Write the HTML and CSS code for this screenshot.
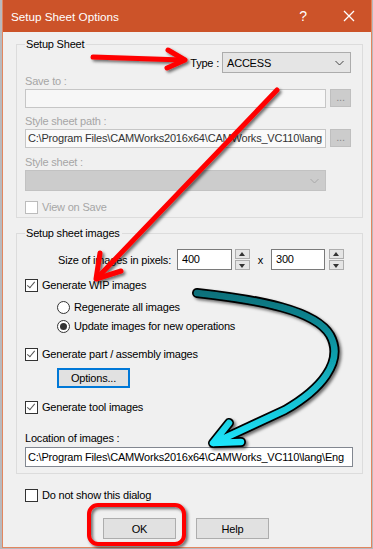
FILE: index.html
```html
<!DOCTYPE html>
<html lang="en">
  <head>
    <meta name="viewport" content="width=device-width, initial-scale=1.0">
    <meta charset="utf-8">
    <title>Setup Sheet Options</title>
    <link rel="stylesheet" href="styles.css">
  </head>
  <body>
    <div class="win">
      <div class="titlebar">
        <span class="title">Setup Sheet Options</span>
        <span class="tb-help">?</span>
        <span class="tb-close">
          <svg width="12" height="12" viewBox="0 0 12 12"><path d="M1 1L11 11M11 1L1 11" stroke="#fff" stroke-width="1.3" fill="none"/></svg>
        </span>
      </div>
      <div class="content">
        <div class="group g1">
          <span class="legend">Setup Sheet</span>
          <div class="type-row">
            <span>Type :</span>
            <div class="select">ACCESS
              <svg class="chev" width="9" height="6" viewBox="0 0 9 6"><path d="M0.5 1L4.5 5L8.5 1" stroke="#444" fill="none"/></svg>
            </div>
          </div>
          <div class="lbl dis l-save">Save to :</div>
          <div class="field-row">
            <div class="input off"></div>
            <div class="dots off">...</div>
          </div>
          <div class="lbl dis l-path">Style sheet path :</div>
          <div class="field-row">
            <div class="input path">C:\Program Files\CAMWorks2016x64\CAMWorks_VC110\lang</div>
            <div class="dots off">...</div>
          </div>
          <div class="lbl dis l-sheet">Style sheet :</div>
          <div class="combo off">
            <svg class="chev" width="9" height="6" viewBox="0 0 9 6"><path d="M0.5 1L4.5 5L8.5 1" stroke="#a8a8a8" fill="none"/></svg>
          </div>
          <div class="check dis c-view"><span class="box"></span>View on Save</div>
        </div>

        <div class="group g2">
          <span class="legend">Setup sheet images</span>
          <div class="size-row">
            <span class="size-lbl">Size of images in pixels:</span>
            <div class="input num">400</div>
            <div class="spin"><span class="up"></span><span class="down"></span></div>
            <span class="times">x</span>
            <div class="input num n2">300</div>
            <div class="spin"><span class="up"></span><span class="down"></span></div>
          </div>
          <div class="check c-wip"><span class="box on"></span>Generate WIP images</div>
          <div class="radio r-regen"><span class="dot"></span>Regenerate all images</div>
          <div class="radio r-update"><span class="dot on"></span>Update images for new operations</div>
          <div class="check c-part"><span class="box on"></span>Generate part / assembly images</div>
          <div class="btn options">Options...</div>
          <div class="check c-tool"><span class="box on"></span>Generate tool images</div>
          <div class="lbl l-loc">Location of images :</div>
          <div class="input loc">C:\Program Files\CAMWorks2016x64\CAMWorks_VC110\lang\Eng</div>
        </div>

        <div class="check c-dont"><span class="box"></span>Do not show this dialog</div>
        <div class="buttons">
          <div class="btn">OK</div>
          <div class="btn">Help</div>
        </div>
      </div>
    </div>

    <svg class="annot" width="373" height="549" viewBox="0 0 373 549">
      <defs>
        <filter id="shadow" x="-20%" y="-20%" width="140%" height="140%">
          <feDropShadow dx="2" dy="2" stdDeviation="1.5" flood-color="#000" flood-opacity="0.55"/>
        </filter>
        <linearGradient id="teal" gradientUnits="userSpaceOnUse" x1="0" y1="290" x2="0" y2="450">
          <stop offset="0" stop-color="#0a6f79"/>
          <stop offset="0.5" stop-color="#12a9b8"/>
          <stop offset="1" stop-color="#1ee9ff"/>
        </linearGradient>
      </defs>
      <g filter="url(#shadow)" stroke="#ff0000" fill="none" stroke-linecap="round" stroke-linejoin="round">
        <path d="M93 57L183 60" stroke-width="5"/>
        <path d="M168 50L185 60L167 68" stroke-width="5"/>
        <path d="M277 90L99 276" stroke-width="5"/>
        <path d="M100 253L96 279L121 271" stroke-width="5"/>
        <rect x="89" y="505" width="95" height="39" rx="9" stroke-width="4"/>
      </g>
      <g filter="url(#shadow)" fill="none" stroke-linecap="round" stroke-linejoin="round">
        <path d="M197 293C260 300 315 310 330 335C345 362 320 390 285 410L214 443M229 423L213 443L241 442" stroke="#000" stroke-width="10"/>
        <path d="M197 293C260 300 315 310 330 335C345 362 320 390 285 410L214 443M229 423L213 443L241 442" stroke="url(#teal)" stroke-width="6.5"/>
      </g>
    </svg>
  </body>
</html>
```

FILE: styles.css
```css
*, *::before, *::after {
  box-sizing: border-box;
}

html, body {
  margin: 0;
  padding: 0;
}

body {
  width: 373px;
  height: 549px;
  overflow: hidden;
  background: #b9b9bd;
  font-family: "Liberation Sans", Arial, sans-serif;
  font-size: 11px;
  letter-spacing: -0.2px;
  color: #000;
  position: relative;
}

.win {
  margin-left: 2px;
  width: 370px;
  height: 548px;
  background: #f0f0f0;
  border: 1px solid #e2865f;
  border-top: none;
  display: flex;
  flex-direction: column;
}

.titlebar {
  height: 32px;
  background: #cc5329;
  color: #fff;
  display: flex;
  align-items: center;
  padding-left: 8px;
  font-size: 11.7px;
  letter-spacing: 0;
  flex-shrink: 0;
}

.titlebar .title {
  flex: 1;
  padding-top: 1px;
}

.titlebar .tb-help {
  font-size: 14px;
  margin-right: 36px;
}

.titlebar .tb-close {
  display: flex;
  margin-right: 16px;
}

.content {
  flex: 1;
  padding-left: 13px;
  display: flex;
  flex-direction: column;
}

.group {
  position: relative;
  width: 347px;
  border: 1px solid #dcdcdc;
  display: flex;
  flex-direction: column;
}

.group .legend {
  position: absolute;
  top: -8px;
  left: 8px;
  padding: 0 2px 0 1px;
  background: #f0f0f0;
  line-height: 14px;
}

.g1 {
  margin-top: 12px;
  padding: 7px 11px 3px 8px;
}

.type-row {
  display: flex;
  justify-content: flex-end;
  align-items: center;
  gap: 3px;
  height: 21px;
}

.select {
  width: 129px;
  height: 21px;
  background: #e5e5e5;
  border: 1px solid #acacac;
  display: flex;
  align-items: center;
  padding-left: 4px;
  position: relative;
}

.chev {
  position: absolute;
  right: 6px;
  top: 7px;
}

.lbl {
  line-height: 14px;
  height: 14px;
}

.dis {
  color: #a6a6a6;
}

.l-save { margin-top: 1px; }
.l-path { margin-top: 6px; }
.l-sheet { margin-top: 7px; }
.l-loc { margin-top: 17px; }

.field-row {
  display: flex;
  gap: 4px;
  margin-top: 1px;
}

.input {
  height: 19px;
  background: #fff;
  border: 1px solid #7a7a7a;
  line-height: 17px;
  padding-left: 2px;
  white-space: nowrap;
  overflow: hidden;
}

.field-row .input {
  width: 301px;
}

.input.off {
  background: #f7f7f7;
  border-color: #c6c6c6;
}

.input.path {
  background: #fafafa;
  border-color: #c6c6c6;
  color: #333;
}

.dots {
  width: 21px;
  height: 18px;
  background: #cccccc;
  border: 1px solid #bfbfbf;
  color: #8a8a8a;
  text-align: center;
  line-height: 14px;
  font-size: 11px;
}

.combo {
  position: relative;
  margin-top: 1px;
  width: 301px;
  height: 21px;
  background: #cccccc;
  border: 1px solid #c2c2c2;
}

.check, .radio {
  display: flex;
  align-items: center;
  gap: 4px;
  height: 14px;
  line-height: 14px;
  white-space: nowrap;
}

.box {
  width: 13px;
  height: 13px;
  background: #fff;
  border: 1px solid #333;
  position: relative;
  flex-shrink: 0;
}

.check.dis .box {
  border-color: #bcbcbc;
}

.box.on::after {
  content: "";
  position: absolute;
  left: 3px;
  top: 0px;
  width: 4px;
  height: 8px;
  border: solid #555;
  border-width: 0 1.5px 1.5px 0;
  transform: rotate(40deg);
}

.c-view { margin-top: 9px; }

.g2 {
  margin-top: 15px;
  padding: 15px 9px 6px 8px;
}

.size-row {
  display: flex;
  align-items: center;
  height: 21px;
}

.size-lbl {
  width: 146px;
  text-align: right;
  margin-right: 6px;
}

.input.num {
  width: 55px;
  height: 21px;
  line-height: 19px;
  padding-left: 4px;
  margin-right: 3px;
}

.input.n2 {
  width: 54px;
  margin-right: 4px;
}

.times {
  width: 21px;
  text-align: center;
}

.spin {
  width: 15px;
  height: 21px;
  display: flex;
  flex-direction: column;
  gap: 1px;
}

.spin span {
  flex: 1;
  background: #e5e5e5;
  border: 1px solid #adadad;
  position: relative;
}

.spin .up::after, .spin .down::after {
  content: "";
  position: absolute;
  left: 3px;
  border-left: 3.5px solid transparent;
  border-right: 3.5px solid transparent;
}

.spin .up::after {
  top: 2px;
  border-bottom: 4px solid #333;
}

.spin .down::after {
  top: 3px;
  border-top: 4px solid #333;
}

.c-wip { margin-top: 8px; }

.radio {
  padding-left: 32px;
}

.r-regen { margin-top: 8px; }
.r-update { margin-top: 5px; }

.dot {
  width: 13px;
  height: 13px;
  border-radius: 50%;
  background: #fff;
  border: 1px solid #333;
  display: flex;
  align-items: center;
  justify-content: center;
  flex-shrink: 0;
}

.dot.on::after {
  content: "";
  width: 7px;
  height: 7px;
  border-radius: 50%;
  background: #333;
}

.c-part { margin-top: 14px; }

.btn {
  width: 73px;
  height: 21px;
  background: #e1e1e1;
  border: 1px solid #adadad;
  display: flex;
  align-items: center;
  justify-content: center;
}

.btn.options {
  margin-top: 7px;
  margin-left: 32px;
  height: 20px;
  border: 2px solid #0078d7;
}

.c-tool { margin-top: 12px; }

.input.loc {
  margin-top: 2px;
  width: 328px;
  height: 20px;
  border-color: #828790;
  line-height: 18px;
}

.c-dont {
  margin-top: 14px;
  margin-left: 9px;
}

.buttons {
  display: flex;
  gap: 20px;
  margin-top: 16px;
  margin-left: 87px;
}

.annot {
  position: absolute;
  left: 0;
  top: 0;
  pointer-events: none;
}
```
